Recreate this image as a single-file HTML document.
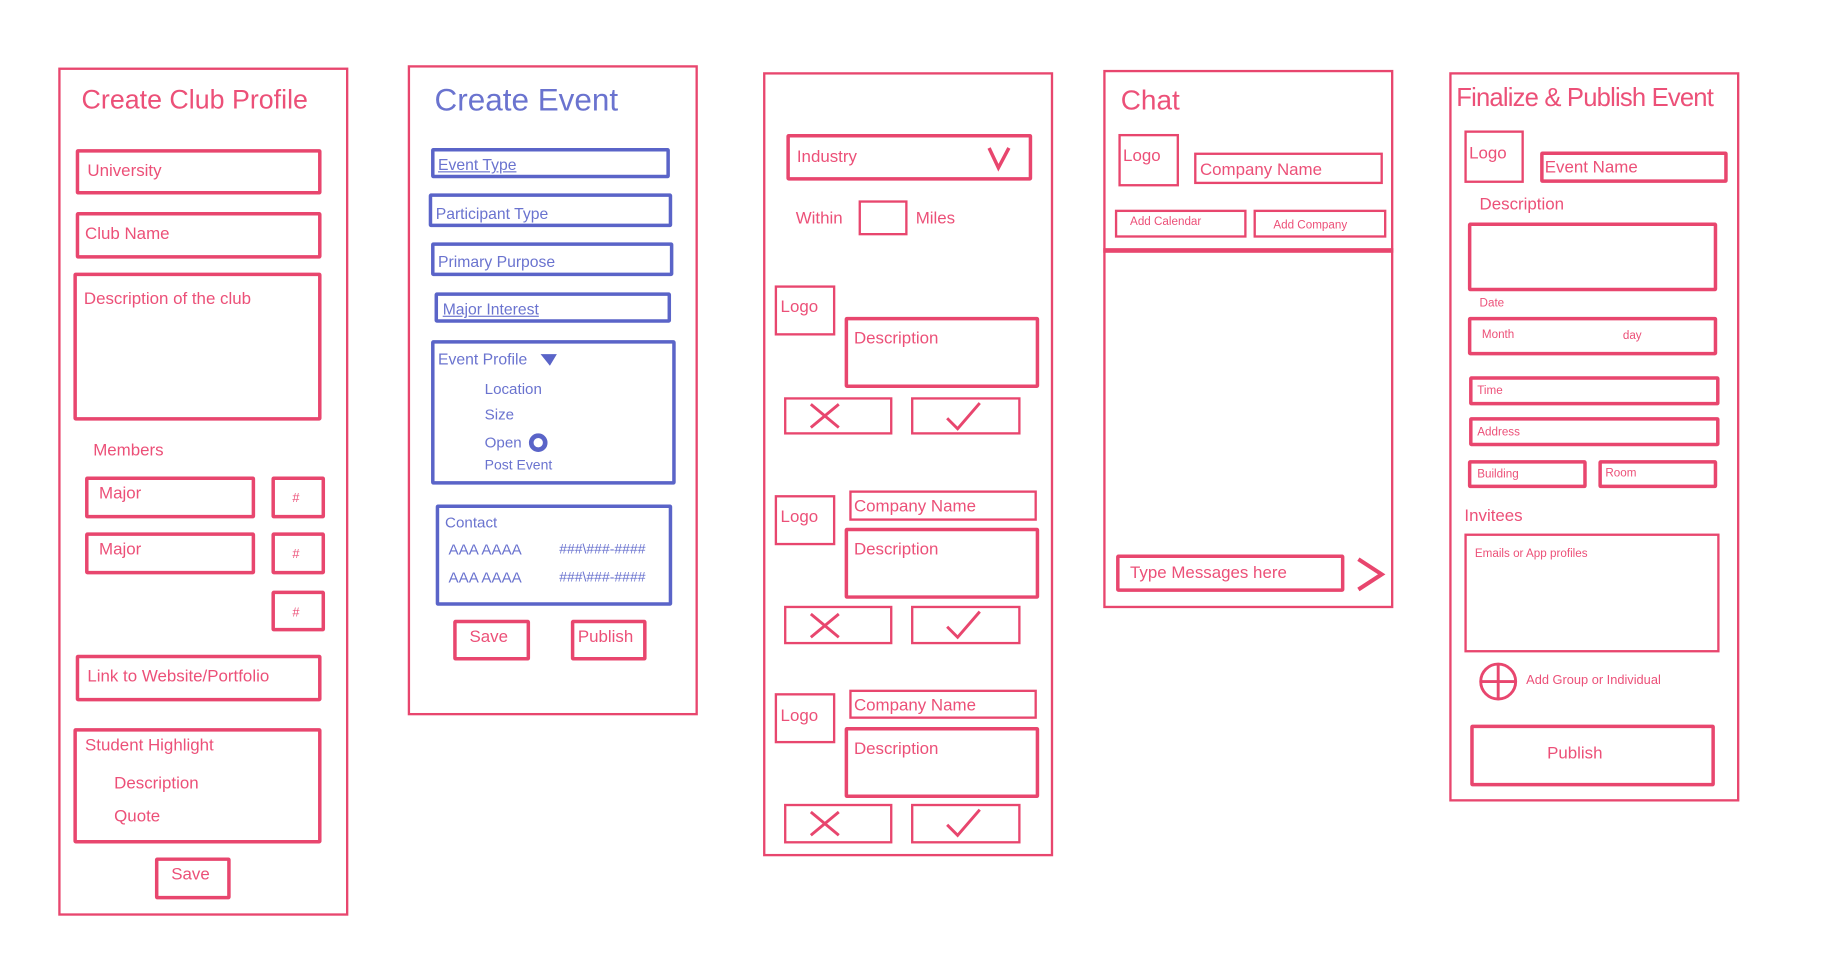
<!DOCTYPE html>
<html><head><meta charset="utf-8"><style>
html,body{margin:0;padding:0;background:#fff;width:1826px;height:964px;overflow:hidden}
#w{position:absolute;left:0;top:0;width:1570px;height:830px;transform:scale(1.165,1.165);transform-origin:0 0;font-family:"Liberation Sans",sans-serif}
#w div{position:absolute;box-sizing:border-box}
.p{border:2.5px solid #e8466e}
.b{border:3.5px solid #e8466e;border-radius:2px}
.bb{border:3.5px solid #5a64c8;border-radius:2px}
.t{color:#ec5078;white-space:nowrap;font-size:14.5px}
.u{color:#6a73cf;white-space:nowrap;font-size:13.5px}
</style></head><body><div id="w">
<!-- Panel 1 -->
<div class="p" style="left:50px;top:58px;width:249px;height:728px"></div>
<div class="t" style="left:70px;top:72px;font-size:23px">Create Club Profile</div>
<div class="b" style="left:65px;top:128px;width:211px;height:39px"></div><div class="t" style="left:75px;top:139px">University</div>
<div class="b" style="left:65px;top:182px;width:211px;height:40px"></div><div class="t" style="left:73px;top:193px">Club Name</div>
<div class="b" style="left:63px;top:234px;width:213px;height:127px"></div><div class="t" style="left:72px;top:249px">Description of the club</div>
<div class="t" style="left:80px;top:379px">Members</div>
<div class="b" style="left:73px;top:409px;width:146px;height:36px"></div><div class="t" style="left:85px;top:416px">Major</div>
<div class="b" style="left:233px;top:409px;width:46px;height:36px"></div><div class="t" style="left:251px;top:422px;font-size:11px">#</div>
<div class="b" style="left:73px;top:457px;width:146px;height:36px"></div><div class="t" style="left:85px;top:464px">Major</div>
<div class="b" style="left:233px;top:457px;width:46px;height:36px"></div><div class="t" style="left:251px;top:470px;font-size:11px">#</div>
<div class="b" style="left:233px;top:507px;width:46px;height:35px"></div><div class="t" style="left:251px;top:520px;font-size:11px">#</div>
<div class="b" style="left:65px;top:562px;width:211px;height:40px"></div><div class="t" style="left:75px;top:573px">Link to Website/Portfolio</div>
<div class="b" style="left:63px;top:625px;width:213px;height:99px"></div>
<div class="t" style="left:73px;top:632px">Student Highlight</div><div class="t" style="left:98px;top:665px">Description</div><div class="t" style="left:98px;top:693px">Quote</div>
<div class="b" style="left:133px;top:736px;width:65px;height:36px"></div><div class="t" style="left:147px;top:743px">Save</div>
<!-- Panel 2 -->
<div class="p" style="left:350px;top:56px;width:249px;height:558px"></div>
<div class="u" style="left:373px;top:71px;font-size:27px">Create Event</div>
<div class="bb" style="left:370px;top:127px;width:205px;height:26px"></div><div class="u" style="left:376px;top:134px;text-decoration:underline">Event Type</div>
<div class="bb" style="left:368px;top:166px;width:209px;height:29px"></div><div class="u" style="left:374px;top:176px">Participant Type</div>
<div class="bb" style="left:370px;top:208px;width:208px;height:29px"></div><div class="u" style="left:376px;top:217px">Primary Purpose</div>
<div class="bb" style="left:373px;top:251px;width:203px;height:26px"></div><div class="u" style="left:380px;top:258px;text-decoration:underline">Major Interest</div>
<div class="bb" style="left:370px;top:292px;width:210px;height:124px"></div>
<div class="u" style="left:376px;top:301px">Event Profile</div>
<svg style="position:absolute;left:462px;top:302px" width="18" height="14"><path d="M2 2 L16 2 L10 12 Z" fill="#5a64c8"/></svg>
<div class="u" style="left:416px;top:326px;font-size:13px">Location</div>
<div class="u" style="left:416px;top:348px;font-size:13px">Size</div>
<div class="u" style="left:416px;top:372px;font-size:13px">Open</div>
<svg style="position:absolute;left:453px;top:371px" width="18" height="18"><circle cx="9" cy="9" r="6" fill="none" stroke="#5a64c8" stroke-width="4"/></svg>
<div class="u" style="left:416px;top:392px;font-size:12px">Post Event</div>
<div class="bb" style="left:374px;top:433px;width:203px;height:87px"></div>
<div class="u" style="left:382px;top:441px;font-size:13px">Contact</div>
<div class="u" style="left:385px;top:464px;font-size:13px">AAA AAAA</div><div class="u" style="left:480px;top:464px;font-size:12px">###\###-####</div>
<div class="u" style="left:385px;top:488px;font-size:13px">AAA AAAA</div><div class="u" style="left:480px;top:488px;font-size:12px">###\###-####</div>
<div class="b" style="left:389px;top:532px;width:66px;height:35px"></div><div class="t" style="left:403px;top:539px">Save</div>
<div class="b" style="left:490px;top:532px;width:65px;height:35px"></div><div class="t" style="left:496px;top:539px">Publish</div>
<!-- Panel 3 -->
<div class="p" style="left:655px;top:62px;width:249px;height:673px"></div>
<div class="b" style="left:675px;top:115px;width:211px;height:40px"></div><div class="t" style="left:684px;top:127px">Industry</div>
<svg style="position:absolute;left:846px;top:124px" width="24" height="24"><path d="M3 3 L11 20 L20 3" fill="none" stroke="#e8466e" stroke-width="3"/></svg>
<div class="t" style="left:683px;top:180px">Within</div>
<div class="p" style="left:737px;top:172px;width:42px;height:30px"></div>
<div class="t" style="left:786px;top:180px">Miles</div>
<div class="p" style="left:665px;top:245px;width:52px;height:43px"></div><div class="t" style="left:670px;top:256px">Logo</div>
<div class="b" style="left:725px;top:272px;width:167px;height:61px"></div><div class="t" style="left:733px;top:283px">Description</div>
<div class="p" style="left:673px;top:341px;width:93px;height:32px"></div><div class="p" style="left:782px;top:341px;width:94px;height:32px"></div>
<svg style="position:absolute;left:693px;top:344px" width="30" height="26"><path d="M3 3 L27 23 M27 3 L3 23" stroke="#e8466e" stroke-width="2.5"/></svg>
<svg style="position:absolute;left:810px;top:343px" width="34" height="28"><path d="M3 16 L12 25 L31 3" fill="none" stroke="#e8466e" stroke-width="2.5"/></svg>
<div class="p" style="left:665px;top:425px;width:52px;height:43px"></div><div class="t" style="left:670px;top:436px">Logo</div>
<div class="p" style="left:729px;top:421px;width:161px;height:26px"></div><div class="t" style="left:733px;top:427px">Company Name</div>
<div class="b" style="left:725px;top:453px;width:167px;height:61px"></div><div class="t" style="left:733px;top:464px">Description</div>
<div class="p" style="left:673px;top:520px;width:93px;height:33px"></div><div class="p" style="left:782px;top:520px;width:94px;height:33px"></div>
<svg style="position:absolute;left:693px;top:524px" width="30" height="26"><path d="M3 3 L27 23 M27 3 L3 23" stroke="#e8466e" stroke-width="2.5"/></svg>
<svg style="position:absolute;left:810px;top:522px" width="34" height="28"><path d="M3 16 L12 25 L31 3" fill="none" stroke="#e8466e" stroke-width="2.5"/></svg>
<div class="p" style="left:665px;top:595px;width:52px;height:43px"></div><div class="t" style="left:670px;top:607px">Logo</div>
<div class="p" style="left:729px;top:592px;width:161px;height:25px"></div><div class="t" style="left:733px;top:598px">Company Name</div>
<div class="b" style="left:725px;top:624px;width:167px;height:61px"></div><div class="t" style="left:733px;top:635px">Description</div>
<div class="p" style="left:673px;top:690px;width:93px;height:34px"></div><div class="p" style="left:782px;top:690px;width:94px;height:34px"></div>
<svg style="position:absolute;left:693px;top:694px" width="30" height="26"><path d="M3 3 L27 23 M27 3 L3 23" stroke="#e8466e" stroke-width="2.5"/></svg>
<svg style="position:absolute;left:810px;top:692px" width="34" height="28"><path d="M3 16 L12 25 L31 3" fill="none" stroke="#e8466e" stroke-width="2.5"/></svg>
<!-- Panel 4 -->
<div class="p" style="left:947px;top:60px;width:249px;height:462px"></div>
<div class="t" style="left:962px;top:73px;font-size:24px">Chat</div>
<div class="p" style="left:960px;top:115px;width:52px;height:45px"></div><div class="t" style="left:964px;top:126px">Logo</div>
<div class="p" style="left:1025px;top:131px;width:162px;height:27px"></div><div class="t" style="left:1030px;top:138px">Company Name</div>
<div class="p" style="left:957px;top:180px;width:113px;height:24px"></div><div class="t" style="left:970px;top:185px;font-size:10px">Add Calendar</div>
<div class="p" style="left:1076px;top:180px;width:114px;height:24px"></div><div class="t" style="left:1093px;top:188px;font-size:10px">Add Company</div>
<div style="left:947px;top:213px;width:249px;height:4px;background:#e8466e"></div>
<div class="b" style="left:958px;top:476px;width:196px;height:32px"></div><div class="t" style="left:970px;top:484px">Type Messages here</div>
<svg style="position:absolute;left:1162px;top:476px" width="28" height="34"><path d="M4 4 L24 17 L4 30" fill="none" stroke="#e8466e" stroke-width="3.5"/></svg>
<!-- Panel 5 -->
<div class="p" style="left:1244px;top:62px;width:249px;height:626px"></div>
<div class="t" style="left:1250px;top:71px;font-size:22px;letter-spacing:-0.7px">Finalize &amp; Publish Event</div>
<div class="p" style="left:1257px;top:112px;width:51px;height:45px"></div><div class="t" style="left:1261px;top:124px">Logo</div>
<div class="b" style="left:1322px;top:130px;width:161px;height:27px"></div><div class="t" style="left:1326px;top:136px">Event Name</div>
<div class="t" style="left:1270px;top:168px">Description</div>
<div class="b" style="left:1260px;top:191px;width:214px;height:59px"></div>
<div class="t" style="left:1270px;top:255px;font-size:10px">Date</div>
<div class="b" style="left:1260px;top:272px;width:214px;height:33px"></div>
<div class="t" style="left:1272px;top:282px;font-size:10px">Month</div><div class="t" style="left:1393px;top:283px;font-size:10px">day</div>
<div class="b" style="left:1261px;top:323px;width:215px;height:25px"></div><div class="t" style="left:1268px;top:330px;font-size:10px">Time</div>
<div class="b" style="left:1261px;top:358px;width:215px;height:25px"></div><div class="t" style="left:1268px;top:366px;font-size:10px">Address</div>
<div class="b" style="left:1260px;top:395px;width:102px;height:24px"></div><div class="t" style="left:1268px;top:402px;font-size:10px">Building</div>
<div class="b" style="left:1372px;top:395px;width:102px;height:24px"></div><div class="t" style="left:1378px;top:401px;font-size:10px">Room</div>
<div class="t" style="left:1257px;top:435px">Invitees</div>
<div class="p" style="left:1257px;top:458px;width:219px;height:102px"></div><div class="t" style="left:1266px;top:470px;font-size:10px">Emails or App profiles</div>
<svg style="position:absolute;left:1268px;top:568px" width="36" height="34"><circle cx="18" cy="17" r="15" fill="none" stroke="#e8466e" stroke-width="2.5"/><path d="M4 17 L32 17 M18 3 L18 31" stroke="#e8466e" stroke-width="2.5"/></svg>
<div class="t" style="left:1310px;top:578px;font-size:11px">Add Group or Individual</div>
<div class="b" style="left:1262px;top:622px;width:210px;height:53px"></div><div class="t" style="left:1328px;top:639px">Publish</div>
</div></body></html>
